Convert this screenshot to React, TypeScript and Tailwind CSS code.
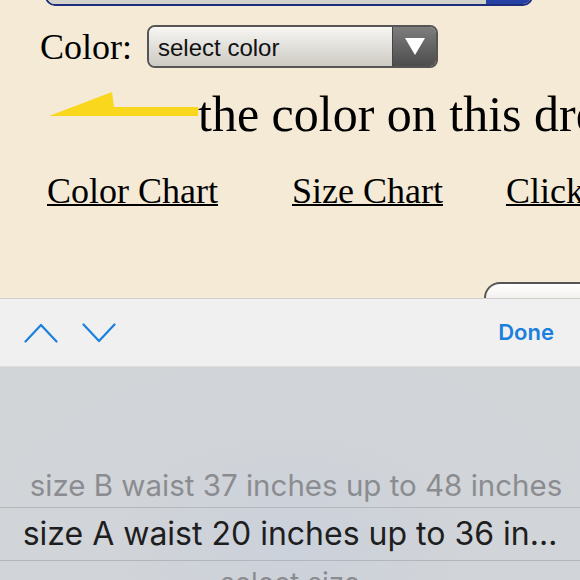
import React from 'react';

const serif = { fontFamily: '"Liberation Serif", "Times New Roman", serif' };

const YellowArrow: React.FC = () => (
  <svg width="153" height="26" viewBox="0 0 153 26" className="mt-[3px] shrink-0">
    <polygon points="4,24 67,0 69,15 153,15 153,24" fill="#f9d71c" />
  </svg>
);

const Chevron: React.FC<{ up?: boolean }> = ({ up }) => (
  <svg width="34" height="20" viewBox="0 0 34 20" fill="none">
    <polyline
      points={up ? '1.5,18.5 17,2 32.5,18.5' : '1.5,1.5 17,18 32.5,1.5'}
      stroke="#1b7fdd"
      strokeWidth="2.2"
      strokeLinecap="round"
      strokeLinejoin="round"
    />
  </svg>
);

const App: React.FC = () => {
  return (
    <div className="w-[580px] h-[580px] overflow-hidden flex flex-col bg-[#f4ead6]">
      {/* page */}
      <div className="h-[298px] shrink-0 flex flex-col bg-[#f4ead6] text-black" style={serif}>
        <div className="-mt-[34px] ml-[45px] w-[488px] h-[40px] flex rounded-[10px] border-2 border-[#1c2d7e] overflow-hidden shrink-0">
          <div className="flex-1 bg-[#d3d1cc]" />
          <div className="w-[45px] bg-[#2441a3]" />
        </div>

        <div className="mt-[19px] ml-[40px] h-[43px] flex items-center shrink-0">
          <span className="text-[36px] leading-none">Color:</span>
          <div className="ml-[15px] w-[291px] h-[43px] flex rounded-[8px] border-2 border-[#555] overflow-hidden">
            <div
              className="flex-1 flex items-center pl-[9px] pt-[2px] text-[24px] text-[#111] bg-gradient-to-b from-[#f7f6f3] to-[#cdcac3]"
              style={{ fontFamily: '"Liberation Sans", Arial, sans-serif' }}
            >
              select color
            </div>
            <div className="w-[44px] flex items-center justify-center border-l border-[#444] bg-gradient-to-b from-[#7d7d7d] to-[#4d4d4d]">
              <svg width="20" height="17" viewBox="0 0 20 17">
                <polygon points="0,0 20,0 10,17" fill="#fff" />
              </svg>
            </div>
          </div>
        </div>

        <div className="mt-[21px] ml-[45px] flex items-start shrink-0 whitespace-nowrap">
          <YellowArrow />
          <span className="text-[50px] leading-none">the color on this dress</span>
        </div>

        <div className="mt-[34px] flex text-[36px] leading-none whitespace-nowrap shrink-0">
          <span className="ml-[47px] underline decoration-2">Color Chart</span>
          <span className="ml-[74px] underline decoration-2">Size Chart</span>
          <span className="ml-[63px] underline decoration-2">Click here</span>
        </div>

        <div className="mt-auto ml-auto w-[96px] h-[16px] rounded-tl-[30px] border-t-2 border-l-2 border-[#555] bg-gradient-to-b from-[#ffffff] to-[#f3f1ee]" />
      </div>

      {/* keyboard accessory bar */}
      <div
        className="h-[69px] shrink-0 flex items-center border-t border-b border-[#cfcfcf] border-b-[#dedede] bg-[#f0f0f0] pl-[24px] pr-[26px]"
        style={{ fontFamily: 'Inter, "Liberation Sans", sans-serif' }}
      >
        <Chevron up />
        <div className="ml-[24px]">
          <Chevron />
        </div>
        <span className="ml-auto text-[22px] font-semibold text-[#1b7fdd]">Done</span>
      </div>

      {/* picker wheel */}
      <div
        className="flex-1 flex flex-col bg-[radial-gradient(ellipse_at_50%_75%,#cbd1db_0%,#d1d4d8_45%,#d2d5d8_100%)]"
        style={{ fontFamily: 'Inter, "Liberation Sans", sans-serif' }}
      >
        <div className="h-[97px] shrink-0" />
        <div className="h-[43px] shrink-0 flex items-center justify-center pl-[12px] text-[29.5px] text-[#8b8c90] whitespace-nowrap">
          size B waist 37 inches up to 48 inches
        </div>
        <div className="h-[54px] shrink-0 flex items-center justify-center border-t border-b border-[#b3b5b9] text-[32px] text-[#1e1e1e] whitespace-nowrap">
          size A waist 20 inches up to 36 in…
        </div>
        <div className="pt-[8px] flex justify-center text-[28px] text-[#8b8c90] leading-none">
          select size
        </div>
      </div>
    </div>
  );
};

export default App;
